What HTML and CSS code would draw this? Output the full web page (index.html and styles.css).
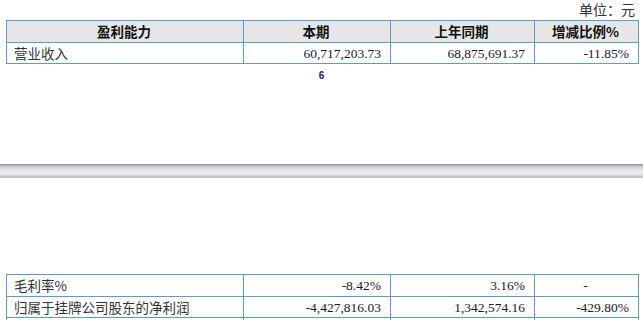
FILE: index.html
```html
<!DOCTYPE html>
<html lang="zh">
<head>
<meta charset="utf-8">
<link rel="stylesheet" href="styles.css">
</head>
<body>
<div class="page page-top">
  <div class="unit">单位：元</div>
  <table class="fin">
    <colgroup>
      <col class="c1"><col class="c2"><col class="c3"><col class="c4">
    </colgroup>
    <tr class="head">
      <th>盈利能力</th><th>本期</th><th>上年同期</th><th>增减比例%</th>
    </tr>
    <tr>
      <td class="label">营业收入</td><td class="num">60,717,203.73</td><td class="num">68,875,691.37</td><td class="num">-11.85%</td>
    </tr>
  </table>
  <div class="pageno">6</div>
</div>
<div class="sep"></div>
<div class="page page-bottom">
  <table class="fin">
    <colgroup>
      <col class="c1"><col class="c2"><col class="c3"><col class="c4">
    </colgroup>
    <tr>
      <td class="label">毛利率%</td><td class="num">-8.42%</td><td class="num">3.16%</td><td class="center">-</td>
    </tr>
    <tr>
      <td class="label">归属于挂牌公司股东的净利润</td><td class="num">-4,427,816.03</td><td class="num">1,342,574.16</td><td class="num">-429.80%</td>
    </tr>
    <tr class="cut">
      <td></td><td></td><td></td><td></td>
    </tr>
  </table>
</div>
</body>
</html>
```

FILE: styles.css
```css
html, body {
  margin: 0;
  padding: 0;
  background: #ffffff;
}
body {
  width: 643px;
  height: 320px;
  overflow: hidden;
  font-family: "Liberation Serif", "Noto Sans CJK SC", serif;
  color: #1a1a1a;
}
.page-top {
  height: 164px;
  padding-left: 6px;
  box-sizing: border-box;
}
.unit {
  height: 20px;
  line-height: 22px;
  font-size: 14px;
  color: #333333;
  text-align: right;
  padding-right: 8px;
  box-sizing: border-box;
}
.fin {
  border-collapse: collapse;
  width: 632px;
  table-layout: fixed;
  font-size: 13.5px;
}
.c1 { width: 237px; }
.c2 { width: 147px; }
.c3 { width: 144px; }
.c4 { width: 104px; }
.fin th, .fin td {
  border: 1px solid #5b9bd5;
  height: 21px;
  padding: 0 9px 0 7px;
  box-sizing: border-box;
  white-space: nowrap;
  overflow: hidden;
  line-height: 19px;
}
.head th {
  background: #e6e6e6;
  font-family: "Noto Sans CJK SC", sans-serif;
  font-weight: 700;
  text-align: center;
  height: 22px;
  color: #111111;
}
.label {
  font-family: "Noto Sans CJK SC", sans-serif;
  color: #333333;
  text-align: left;
}
.num { text-align: right; }
.center { text-align: center; }
.pageno {
  text-align: center;
  font-family: "Liberation Sans", sans-serif;
  font-weight: 700;
  font-size: 10px;
  color: #222244;
  margin-top: 6px;
  padding-right: 6px;
}
.sep {
  height: 14px;
  background: linear-gradient(to bottom, #8c8c8c 0px, #a8a8ac 1px, #cfcfd4 3px, #e2e2e8 6px, #ececf2 9px, #e0e0e6 11px, #c8c8cc 12px, #c0c0c4 14px);
}
.page-bottom {
  padding-top: 96px;
  padding-left: 6px;
}
.page-bottom .fin tr:first-child td { height: 22px; }
.cut td { height: 10px; }
```
